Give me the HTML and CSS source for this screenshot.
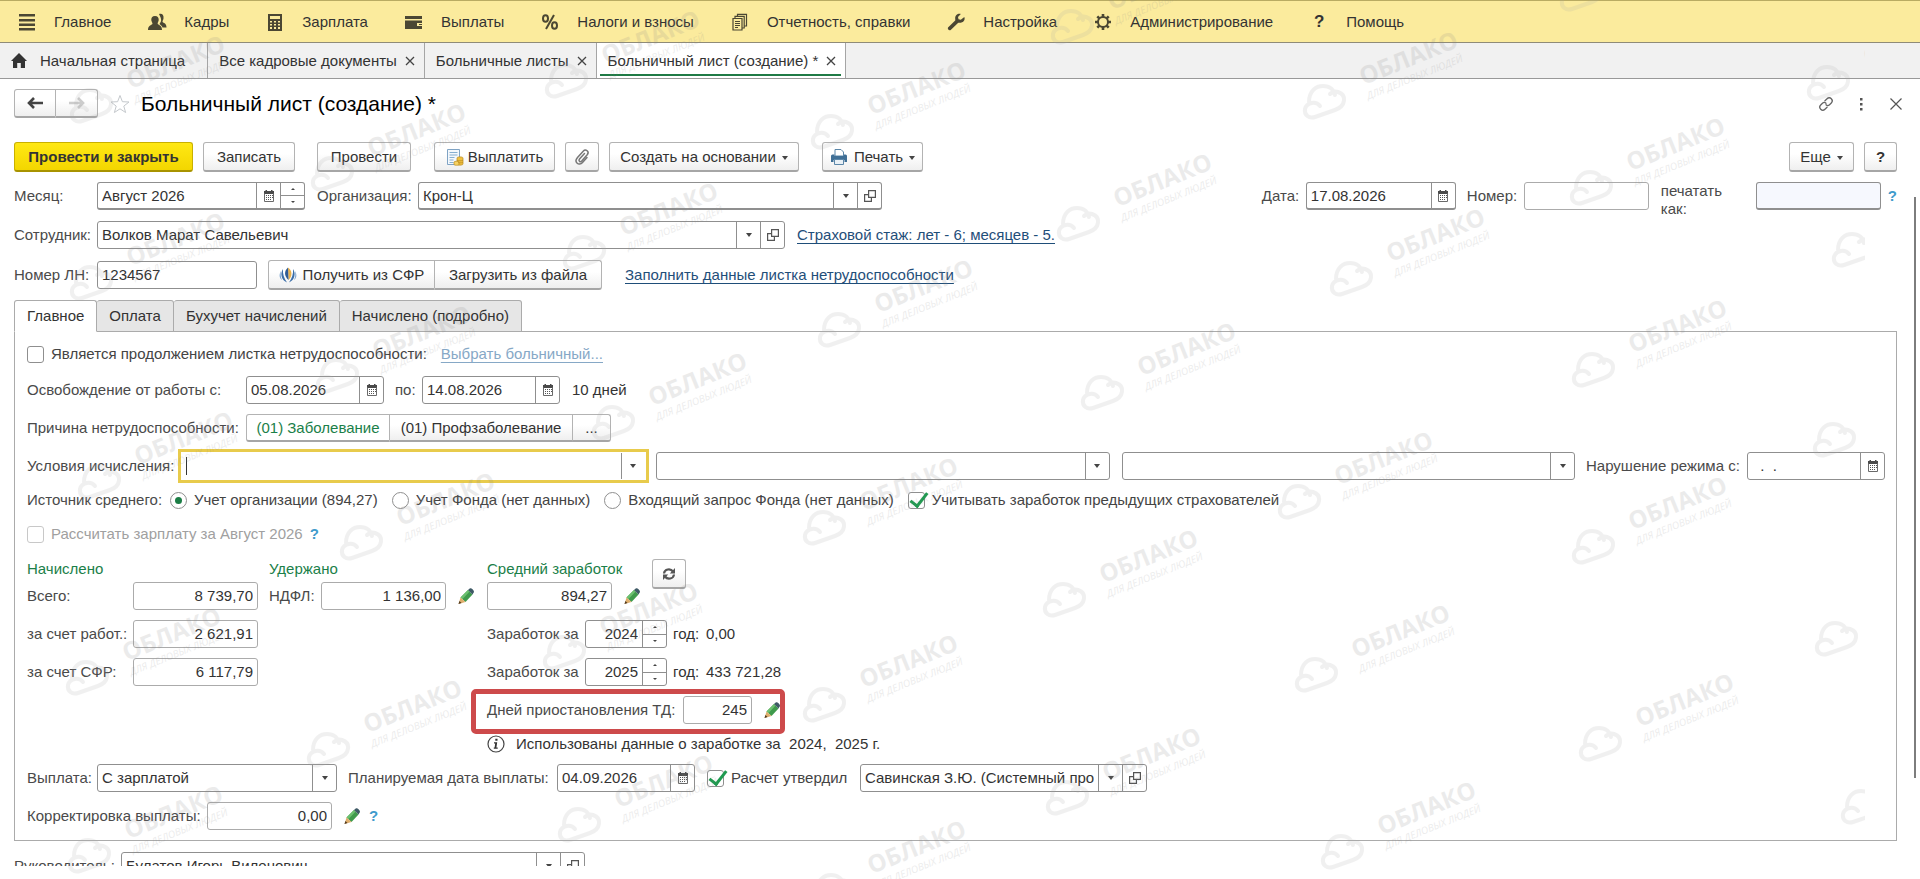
FILE: index.html
```html
<!DOCTYPE html>
<html lang="ru">
<head>
<meta charset="utf-8">
<title>Больничный лист (создание) *</title>
<link rel="stylesheet" href="styles.css">
</head>
<body>
<svg class="defs" aria-hidden="true">
  <defs>
    <symbol id="i-cal" viewBox="0 0 12 12"><path fill="#4a4a4a" d="M1 1h1.500V0h1.500v1h4V0h1.500v1H11v3H1z"/><path fill="none" stroke="#6a6a6a" d="M1.500 3.500v8h9v-8"/><path fill="#555" d="M3 5h1v1H3zM5 5h1v1H5zM7 5h1v1H7zM9 5h1v1H9zM3 7h1v1H3zM5 7h1v1H5zM7 7h1v1H7zM9 7h1v1H9zM3 9h1v1H3zM5 9h1v1H5zM7 9h1v1H7z"/></symbol>
    <symbol id="i-caret" viewBox="0 0 6 4"><path fill="#444" d="M0 0h6L3 4z"/></symbol>
    <symbol id="i-open" viewBox="0 0 12 12"><path fill="none" stroke="#555" stroke-width="1.200" d="M4.600.6h6.800v6.800H4.600zM4.600 4.600h-4v6.800h6.800v-4"/></symbol>
    <symbol id="i-up" viewBox="0 0 4 2"><path fill="#444" d="M0 2h4L2 0z"/></symbol>
    <symbol id="i-down" viewBox="0 0 4 2"><path fill="#444" d="M0 0h4L2 2z"/></symbol>
    <symbol id="i-pencil" viewBox="0 0 16 16"><path fill="#3f9a4c" d="M10 2l4.500 4.500-7 7.500L2.500 9.500z"/><path fill="#6cc06f" d="M10 2l1.600 1.600-7.300 7.700-1.800-1.800z"/><path fill="#3f5a66" d="M10 2L12 .3q1-.6 2.800 1.200t.9 3L14.500 6.500z"/><path fill="#dfae6c" d="M2.500 9.500L7.500 14 .5 16z"/><path fill="#4b3820" d="M1.400 13L.5 16l3-.9z"/></symbol>
    <symbol id="i-x" viewBox="0 0 10 10"><path stroke="#444" stroke-width="1.300" d="M1 1l8 8M9 1L1 9"/></symbol>
    <g id="cloud" fill="none" stroke="#a8a8a8" stroke-width="4" stroke-linecap="round" stroke-linejoin="round">
      <path d="M-16 0C-16-11-9-16-2-16C5-16 9-12 10-7M-5 4C-9-1-18 0-20 7C-21 13-16 17-10 15L10 8C21 4 22-7 13-10C10-11 7-10 5-8"/>
    </g>
    <g id="wm">
      <use href="#cloud"/>
      <g class="wm-text" transform="rotate(-22)">
        <text class="wm-name" x="42" y="-1">ОБЛАКО</text>
        <text class="wm-sub" x="41" y="14">ДЛЯ ДЕЛОВЫХ ЛЮДЕЙ</text>
      </g>
    </g>
  </defs>
</svg>

<nav class="menu" aria-label="Разделы">
  <a class="menu-item" href="#"><svg class="mi" viewBox="0 0 20 20"><path fill="#4b4733" d="M2 2h16v2.500H2zM2 7h16v2.500H2zM2 11.500h16V14H2zM2 16h16v2.500H2z"/></svg>Главное</a>
  <a class="menu-item" href="#"><svg class="mi" viewBox="0 0 20 20"><g fill="#4b4733"><path d="M12 2c3-1 5 1 4.500 4.500-.2 1.500-1 2-1 3.500 2 1.500 4 1.500 4 5.500h-4c-.5-2-2-2.500-3-3.500 1-1.500 2-3 1.500-5-.3-1.500-1-3-2-5z"/><path d="M8 4C10.800 4 12 6 11.700 8.300c-.3 1.700-1.200 2.200-1 3.700 2 1.500 4.300 2 4.300 6H1c0-4 2.500-4.500 4.500-6 0-1.500-.9-2-1.200-3.700C4 6 5.200 4 8 4z"/></g></svg>Кадры</a>
  <a class="menu-item" href="#"><svg class="mi" viewBox="0 0 20 20"><path fill="#4b4733" fill-rule="evenodd" d="M3 2h14v17H3zM5 4v3h10V4zM5 9v1.500h2V9zM9 9v1.500h2V9zM13 9v1.500h2V9zM5 12v1.500h2V12zM9 12v1.500h2V12zM13 12v1.500h2V12zM5 15v2h2v-2zM9 15v2h2v-2zM13 15v2h2v-2z"/></svg>Зарплата</a>
  <a class="menu-item" href="#"><svg class="mi" viewBox="0 0 20 20"><path fill="#4b4733" d="M1 4h17v3H1zM1 8.500h17V11h-5v3h5v3H1z"/><path fill="#4b4733" d="M15 12h3v1h-3z"/></svg>Выплаты</a>
  <a class="menu-item" href="#"><svg class="mi" viewBox="0 0 20 20"><g fill="none" stroke="#4b4733" stroke-width="2"><ellipse cx="5.500" cy="6.500" rx="2.500" ry="3.300"/><ellipse cx="14.500" cy="13.500" rx="2.500" ry="3.300"/><path d="M14 3L6 17"/></g></svg>Налоги и взносы</a>
  <a class="menu-item" href="#"><svg class="mi" viewBox="0 0 20 20"><g fill="none" stroke="#4b4733" stroke-width="1.200"><path d="M3 6.500h9v11.500H3zM5 6V4.300h9.200V16H12.500M7.500 4V2.300h9V14h-2"/><path d="M5 9.500h5M5 11.500h5M5 13.500h5M5 15.500h3"/></g></svg>Отчетность, справки</a>
  <a class="menu-item" href="#"><svg class="mi" viewBox="0 0 20 20"><path fill="#4b4733" d="M18.300 5l-3.500 2.800-2.300-.5-.5-2.300L14.800 2C12 1.200 9 3 9.200 6.500c0 1 .3 1.500 0 2L2 15.500c-.8 1.500 1 3.500 2.700 2.500L12 11c1-.5 2 0 3-.3 3-.7 4.300-3 3.300-5.700z"/></svg>Настройка</a>
  <a class="menu-item" href="#"><svg class="mi" viewBox="0 0 20 20"><circle cx="10" cy="10" r="5" fill="none" stroke="#4b4733" stroke-width="2"/><path stroke="#4b4733" stroke-width="2.600" d="M10 2v3M10 15v3M2 10h3M15 10h3M4.300 4.300l2 2M13.700 13.700l2 2M4.300 15.700l2-2M13.700 6.300l2-2"/></svg>Администрирование</a>
  <a class="menu-item" href="#"><span class="mi mi-q">?</span>Помощь</a>
</nav>

<nav class="tabs" aria-label="Открытые окна">
  <div class="tab tab-home"><svg class="home" viewBox="0 0 16 15"><path fill="#333" d="M8 0l8 8h-2v7H9.800v-5H6.200v5H2V8H0z"/></svg><a href="#">Начальная страница</a></div>
  <div class="tab"><a href="#">Все кадровые документы</a><button class="tab-x" aria-label="Закрыть"><svg><use href="#i-x"/></svg></button></div>
  <div class="tab"><a href="#">Больничные листы</a><button class="tab-x" aria-label="Закрыть"><svg><use href="#i-x"/></svg></button></div>
  <div class="tab tab-on"><a href="#">Больничный лист (создание) *</a><button class="tab-x" aria-label="Закрыть"><svg><use href="#i-x"/></svg></button></div>
</nav>

<main class="page">
  <header class="head">
    <div class="group nav-group">
      <button class="btn nav-btn" aria-label="Назад"><svg viewBox="0 0 16 12"><path fill="none" stroke="#444" stroke-width="2.600" d="M16 6H3M7 1L2 6l5 5"/></svg></button><button class="btn nav-btn" aria-label="Вперед"><svg viewBox="0 0 16 12"><path fill="none" stroke="#ccc" stroke-width="2.600" d="M0 6h13M9 1l5 5-5 5"/></svg></button>
    </div>
    <button class="icon-btn star" aria-label="В избранное"><svg viewBox="0 0 20 20"><path fill="none" stroke="#c4c8cc" d="M10 1.500l2.400 6.200 6.600.3-5.200 4.100 1.800 6.400L10 14.800l-5.600 3.700 1.800-6.400L1 8l6.600-.3z"/></svg></button>
    <h1>Больничный лист (создание) *</h1>
    <div class="head-tools">
      <button class="icon-btn" aria-label="Ссылка"><svg viewBox="0 0 18 18"><g fill="none" stroke="#666" stroke-width="1.300" stroke-linecap="round" transform="rotate(45 9 9)"><path d="M6 7.500V4.500C6 .5 12 .5 12 4.500V7C12 8.500 11 9.500 9.500 9.500M12 10.500v3C12 17.500 6 17.500 6 13.500V11C6 9.500 7 8.500 8.500 8.500"/></g></svg></button>
      <button class="icon-btn" aria-label="Меню"><svg viewBox="0 0 18 18"><path fill="#555" d="M8 3h2.500v2.500H8zM8 8h2.500v2.500H8zM8 13h2.500v2.500H8z"/></svg></button>
      <button class="icon-btn" aria-label="Закрыть"><svg viewBox="0 0 18 18"><path stroke="#555" stroke-width="1.200" d="M3.500 3.500l11 11M14.500 3.500l-11 11"/></svg></button>
    </div>
  </header>

  <div class="toolbar">
    <button class="btn primary">Провести и закрыть</button>
    <button class="btn b-save">Записать</button>
    <button class="btn b-post">Провести</button>
    <button class="btn b-pay"><svg class="bi" viewBox="0 0 18 18"><path fill="#f4f8fc" stroke="#7fa3c4" d="M1.500 1.500h12v15h-12z"/><path stroke="#86aed0" d="M3.500 4.500h8M3.500 7h8M3.500 9.500h5M3.500 12h4M3.500 14.500h4"/><path fill="#f0c040" stroke="#b98a1c" stroke-width=".7" d="M11 10c0-1.500 6-1.500 6 0v6c0 1.500-6 1.500-6 0z"/><path fill="#f6d263" stroke="#b98a1c" stroke-width=".7" d="M8 14c0-1 5-1 5 0v2.500c0 1-5 1-5 0z"/><path fill="none" stroke="#b98a1c" stroke-width=".7" d="M11 12c0 1 6 1 6 0M12 14.500c2 .6 5 .3 5-.5"/></svg>Выплатить</button>
    <button class="btn b-clip" aria-label="Файлы"><svg class="bi" viewBox="0 0 18 18"><path fill="none" stroke="#777" stroke-width="1.500" stroke-linecap="round" d="M11.500 5.500l-5 5.500c-1.500 2 .8 3.500 2.200 2l5.500-6.200c2.600-3.300-1.500-6.300-4-3.600L4.500 9.500c-4 4.700 1.500 9 5 5l4.500-5"/></svg></button>
    <button class="btn b-create">Создать на основании<svg class="caret"><use href="#i-caret"/></svg></button>
    <button class="btn b-print"><svg class="bi" viewBox="0 0 18 18"><path fill="#fff" stroke="#5b86a8" d="M5 1.500h6l2.500 2.500v4h-8.500z"/><path fill="#3f6f96" d="M1 8q0-1.500 1.500-1.500h2V8h9.500V6.500h1.500Q17 6.500 17 8v6h-2.500v-2h-11v2H1z"/><path fill="#e8f0f6" stroke="#5b86a8" d="M4.500 11.500h9v5h-9z"/></svg>Печать<svg class="caret"><use href="#i-caret"/></svg></button>
    <button class="btn b-more">Еще<svg class="caret"><use href="#i-caret"/></svg></button>
    <button class="btn b-help">?</button>
  </div>

  <section class="form">
    <div class="row top">
      <label class="lbl l-first" for="month">Месяц:</label>
      <div class="field strong f-month"><input id="month" value="Август 2026"><button class="fb" aria-label="Календарь"><svg class="cal"><use href="#i-cal"/></svg></button><span class="spin"><button aria-label="Больше"><svg><use href="#i-up"/></svg></button><button aria-label="Меньше"><svg><use href="#i-down"/></svg></button></span></div>
      <label class="lbl l-org" for="org">Организация:</label>
      <div class="field strong f-org"><input id="org" value="Крон-Ц"><button class="fb" aria-label="Выбрать"><svg class="car"><use href="#i-caret"/></svg></button><button class="fb" aria-label="Открыть"><svg class="cal"><use href="#i-open"/></svg></button></div>
      <div class="row right">
        <label class="lbl l-date" for="date">Дата:</label>
        <div class="field strong f-doc-date"><input id="date" value="17.08.2026"><button class="fb" aria-label="Календарь"><svg class="cal"><use href="#i-cal"/></svg></button></div>
        <label class="lbl l-num" for="num">Номер:</label>
        <div class="field soft f-num"><input id="num"></div>
        <label class="lbl l-printas" for="printas">печатать как:</label>
        <div class="field strong tint f-num"><input id="printas"></div>
        <button class="hint h-top" aria-label="Подсказка">?</button>
      </div>
    </div>

    <div class="row">
      <label class="lbl l-first" for="emp">Сотрудник:</label>
      <div class="field f-emp"><input id="emp" value="Волков Марат Савельевич"><button class="fb" aria-label="Выбрать"><svg class="car"><use href="#i-caret"/></svg></button><button class="fb" aria-label="Открыть"><svg class="cal"><use href="#i-open"/></svg></button></div>
      <a class="link ml12" href="#">Страховой стаж: лет - 6; месяцев - 5.</a>
    </div>

    <div class="row">
      <label class="lbl l-first" for="ln">Номер ЛН:</label>
      <div class="field f-ln"><input id="ln" value="1234567"></div>
      <div class="group sfr">
        <button class="btn b-sfr"><svg class="bi" viewBox="0 0 18 18"><path fill="#3b6ea8" d="M4 3C1 7 2 14 8 16.500C5 12 3.500 8 4 3zM14 3c3 4 2 11-4 13.500c3-4.500 4.500-8.500 4-13.500z"/><path fill="#7fa6d0" d="M2 5C0 8 0 12 3 14C1.500 11 1.500 8 2 5zM16 5c2 3 2 7-1 9c1.500-3 1.500-6 1-9z"/><path fill="#e8b04a" d="M9 1.500c4.500 3 4.500 9 .5 12.500z"/><path fill="#2f5c95" d="M9 1.500C5 5 5 10 9.500 14z"/></svg>Получить из СФР</button><button class="btn b-file">Загрузить из файла</button>
      </div>
      <a class="link ml23" href="#">Заполнить данные листка нетрудоспособности</a>
    </div>

    <div class="ptabs" role="tablist">
      <button class="ptab on" role="tab">Главное</button><button class="ptab" role="tab">Оплата</button><button class="ptab" role="tab">Бухучет начислений</button><button class="ptab" role="tab">Начислено (подробно)</button>
    </div>

    <div class="panel">
      <div class="row line first-line">
        <label class="check"><input type="checkbox">Является продолжением листка нетрудоспособности:</label>
        <a class="link pale ml14" href="#">Выбрать больничный...</a>
      </div>

      <div class="row">
        <label class="lbl l-reason" for="from">Освобождение от работы с:</label>
        <div class="field f-date"><input id="from" value="05.08.2026"><button class="fb" aria-label="Календарь"><svg class="cal"><use href="#i-cal"/></svg></button></div>
        <label class="lbl l-to" for="to">по:</label>
        <div class="field f-date"><input id="to" value="14.08.2026"><button class="fb" aria-label="Календарь"><svg class="cal"><use href="#i-cal"/></svg></button></div>
        <span class="txt ml12">10 дней</span>
      </div>

      <div class="row">
        <span class="lbl l-reason">Причина нетрудоспособности:</span>
        <div class="group seg">
          <button class="btn seg-a">(01) Заболевание</button><button class="btn seg-b">(01) Профзаболевание</button><button class="btn seg-c">...</button>
        </div>
      </div>

      <div class="row">
        <label class="lbl l-cond" for="cond1">Условия исчисления:</label>
        <div class="field focus c1"><span class="cursor"></span><input id="cond1"><button class="fb" aria-label="Выбрать"><svg class="car"><use href="#i-caret"/></svg></button></div>
        <div class="field c2"><input aria-label="Условие 2"><button class="fb" aria-label="Выбрать"><svg class="car"><use href="#i-caret"/></svg></button></div>
        <div class="field c3"><input aria-label="Условие 3"><button class="fb" aria-label="Выбрать"><svg class="car"><use href="#i-caret"/></svg></button></div>
        <label class="lbl l-viol" for="viol">Нарушение режима с:</label>
        <div class="field f-date"><input id="viol" value="  .  ."><button class="fb" aria-label="Календарь"><svg class="cal"><use href="#i-cal"/></svg></button></div>
      </div>

      <div class="row line sources">
        <span class="lbl l-src">Источник среднего:</span>
        <label class="check"><input type="radio" name="src" checked>Учет организации (894,27)</label>
        <label class="check"><input type="radio" name="src">Учет Фонда (нет данных)</label>
        <label class="check"><input type="radio" name="src">Входящий запрос Фонда (нет данных)</label>
        <label class="check"><input type="checkbox" checked>Учитывать заработок предыдущих страхователей</label>
      </div>

      <div class="row line calc">
        <label class="check off"><input type="checkbox" disabled>Рассчитать зарплату за Август 2026</label>
        <button class="hint" aria-label="Подсказка">?</button>
      </div>

      <div class="totals">
        <section class="col">
          <h2>Начислено</h2>
          <div class="row"><label class="lbl l-sum" for="all">Всего:</label><div class="field soft f-sum num"><input id="all" value="8 739,70"></div></div>
          <div class="row"><label class="lbl l-sum" for="emplr">за счет работ.:</label><div class="field soft f-sum num"><input id="emplr" value="2 621,91"></div></div>
          <div class="row"><label class="lbl l-sum" for="sfr">за счет СФР:</label><div class="field soft f-sum num"><input id="sfr" value="6 117,79"></div></div>
        </section>
        <section class="col">
          <h2>Удержано</h2>
          <div class="row"><label class="lbl l-ndfl" for="ndfl">НДФЛ:</label><div class="field soft f-sum num"><input id="ndfl" value="1 136,00"></div><button class="pen" aria-label="Изменить"><svg><use href="#i-pencil"/></svg></button></div>
        </section>
        <section class="col">
          <h2>Средний заработок</h2>
          <div class="row"><div class="field soft f-sum num"><input aria-label="Средний заработок" value="894,27"></div><button class="pen" aria-label="Изменить"><svg><use href="#i-pencil"/></svg></button></div>
          <div class="row"><label class="lbl l-year" for="y1">Заработок за</label><div class="field f-year num"><input id="y1" value="2024"><span class="spin"><button aria-label="Больше"><svg><use href="#i-up"/></svg></button><button aria-label="Меньше"><svg><use href="#i-down"/></svg></button></span></div><span class="txt year">год:</span><span class="txt">0,00</span></div>
          <div class="row"><label class="lbl l-year" for="y2">Заработок за</label><div class="field f-year num"><input id="y2" value="2025"><span class="spin"><button aria-label="Больше"><svg><use href="#i-up"/></svg></button><button aria-label="Меньше"><svg><use href="#i-down"/></svg></button></span></div><span class="txt year">год:</span><span class="txt">433 721,28</span></div>
          <div class="row suspend"><label class="lbl l-susp" for="susp">Дней приостановления ТД:</label><div class="field soft f-susp num"><input id="susp" value="245"></div><button class="pen" aria-label="Изменить"><svg><use href="#i-pencil"/></svg></button></div>
          <div class="row line info"><svg class="info-i" viewBox="0 0 18 18"><circle cx="9" cy="9" r="8" fill="none" stroke="#444" stroke-width="1.200"/><path fill="#333" d="M8.300 3.800h2.200v2H8.300zM7 7.300h3.200l-.8 5.200h1.300v1.200H6.800v-1.200h.8l.6-4H7z"/></svg><span class="txt pre">Использованы данные о заработке за  2024,  2025 г.</span></div>
        </section>
        <button class="btn refresh" aria-label="Обновить"><svg viewBox="0 0 14 14"><g fill="none" stroke="#555" stroke-width="2.200"><path d="M2 6.500C2.500 2 8.500 1 11 4.500M12 7.500C11.500 12 5.500 13 3 9.500"/></g><path fill="#555" d="M13 1v5.500H7.800zM1 13V7.500h5.200z"/></svg></button>
      </div>

      <div class="row">
        <label class="lbl l-pay" for="pay">Выплата:</label>
        <div class="field f-pay"><select id="pay"><option>С зарплатой</option></select><span class="fb"><svg class="car"><use href="#i-caret"/></svg></span></div>
        <label class="lbl l-plan" for="plan">Планируемая дата выплаты:</label>
        <div class="field f-date"><input id="plan" value="04.09.2026"><button class="fb" aria-label="Календарь"><svg class="cal"><use href="#i-cal"/></svg></button></div>
        <label class="check l-appr"><input type="checkbox" checked>Расчет утвердил</label>
        <div class="field f-appr"><input aria-label="Расчет утвердил" value="Савинская З.Ю. (Системный про"><button class="fb" aria-label="Выбрать"><svg class="car"><use href="#i-caret"/></svg></button><button class="fb" aria-label="Открыть"><svg class="cal"><use href="#i-open"/></svg></button></div>
      </div>

      <div class="row">
        <label class="lbl l-corr" for="corr">Корректировка выплаты:</label>
        <div class="field soft f-sum num"><input id="corr" value="0,00"></div>
        <button class="pen" aria-label="Изменить"><svg><use href="#i-pencil"/></svg></button>
        <button class="hint h-corr" aria-label="Подсказка">?</button>
      </div>
    </div>

    <div class="row">
      <label class="lbl l-head" for="boss">Руководитель:</label>
      <div class="field f-head"><input id="boss" value="Булатов Игорь Виленович"><button class="fb" aria-label="Выбрать"><svg class="car"><use href="#i-caret"/></svg></button><button class="fb" aria-label="Открыть"><svg class="cal"><use href="#i-open"/></svg></button></div>
    </div>
  </section>
</main>
<div class="scroll"></div>

<svg class="marks" aria-hidden="true">
  <use href="#wm" x="92" y="106"/><use href="#wm" x="333" y="174"/><use href="#wm" x="567" y="81"/>
  <use href="#wm" x="833" y="132"/><use href="#wm" x="1073" y="27"/><use href="#wm" x="1079" y="224"/>
  <use href="#wm" x="1325" y="102"/><use href="#wm" x="1829" y="83"/><use href="#wm" x="1592" y="188"/>
  <use href="#wm" x="1582" y="-6"/><use href="#wm" x="92" y="283"/><use href="#wm" x="585" y="253"/>
  <use href="#wm" x="338" y="376"/><use href="#wm" x="614" y="423"/><use href="#wm" x="840" y="330"/>
  <use href="#wm" x="1103" y="393"/><use href="#wm" x="1352" y="279"/><use href="#wm" x="1594" y="370"/>
  <use href="#wm" x="1854" y="250"/><use href="#wm" x="1835" y="440"/><use href="#wm" x="100" y="482"/>
  <use href="#wm" x="362" y="543"/><use href="#wm" x="565" y="653"/><use href="#wm" x="825" y="528"/>
  <use href="#wm" x="1065" y="600"/><use href="#wm" x="1300" y="502"/><use href="#wm" x="1594" y="547"/>
  <use href="#wm" x="1837" y="639"/><use href="#wm" x="88" y="678"/><use href="#wm" x="329" y="750"/>
  <use href="#wm" x="90" y="856"/><use href="#wm" x="580" y="825"/><use href="#wm" x="825" y="705"/>
  <use href="#wm" x="1068" y="798"/><use href="#wm" x="833" y="891"/><use href="#wm" x="1317" y="675"/>
  <use href="#wm" x="1601" y="744"/><use href="#wm" x="1343" y="852"/><use href="#wm" x="1863" y="807"/>
</svg>
</body>
</html>
```
FILE: styles.css
```css
* { box-sizing: border-box; }
html, body { height: 100%; }
body {
  margin: 0;
  display: flex;
  flex-direction: column;
  position: relative;
  overflow: hidden;
  background: #fff;
  color: #333;
  font: 15px/18px "Liberation Sans", Arial, sans-serif;
}
button, input, select { font: inherit; color: inherit; margin: 0; }
button { cursor: pointer; }
svg { display: block; flex: none; }
.defs { position: absolute; width: 0; height: 0; }

/* Section menu */
.menu {
  flex: none;
  height: 43px;
  display: flex;
  align-items: center;
  gap: 36px;
  padding-left: 17px;
  background: #fbeb9d;
  border-top: 1px solid #b9ab62;
  border-bottom: 1px solid #8f8b78;
}
.menu-item { display: flex; align-items: center; gap: 17px; color: #333; text-decoration: none; white-space: nowrap; }
.mi { width: 20px; height: 20px; }
.mi-q { font-weight: bold; font-size: 17px; line-height: 20px; text-align: center; }

/* Window tabs */
.tabs { flex: none; height: 36px; display: flex; background: #f1f1f1; border-bottom: 1px solid #999; }
.tab { display: flex; align-items: center; gap: 8px; padding: 0 9px 0 11px; border-right: 1px solid #a5a5a5; position: relative; }
.tab a { color: #333; text-decoration: none; white-space: nowrap; }
.tab-home { padding: 0 22px 0 11px; gap: 13px; }
.tab-on { background: #fff; }
.tab-on::after { content: ""; position: absolute; left: 3px; right: 4px; bottom: 2px; height: 2px; background: #1f7a45; }
.home { width: 16px; height: 15px; }
.tab-x { border: 0; background: none; padding: 0; }
.tab-x svg { width: 10px; height: 10px; }

/* Page */
.page { flex: 1; min-height: 0; overflow: hidden; margin-bottom: 13px; padding: 10px 23px 0 14px; }
.head { display: flex; align-items: center; height: 29px; }
.head h1 { margin: 0 0 0 11px; font-size: 21px; line-height: 24px; font-weight: normal; color: #000; }
.icon-btn { border: 0; background: none; padding: 0; }
.icon-btn svg { width: 18px; height: 18px; }
.star { margin-left: 12px; }
.star svg { width: 20px; height: 20px; }
.head-tools { margin-left: auto; display: flex; gap: 17px; margin-right: -8px; }

.btn {
  height: 30px;
  display: flex;
  align-items: center;
  justify-content: center;
  gap: 6px;
  padding: 0;
  border: 1px solid #b3b3b3;
  border-bottom: 2px solid #a6a6a6;
  border-radius: 3px;
  background: linear-gradient(#fff 40%, #efefef);
  color: #333;
  white-space: nowrap;
}
.group { display: flex; }
.group .btn { border-radius: 0; }
.group .btn + .btn { border-left: 0; }
.group .btn:first-child { border-radius: 3px 0 0 3px; }
.group .btn:last-child { border-radius: 0 3px 3px 0; }
.nav-btn { width: 42px; height: 29px; }
.nav-btn svg { width: 16px; height: 12px; }
.toolbar { display: flex; margin-top: 24px; }
.primary { width: 179px; font-weight: bold; border-color: #c9b000; border-bottom-color: #a89300; background: linear-gradient(#ffe814, #f3d600); }
.b-save { width: 92px; margin-left: 10px; }
.b-post { width: 94px; margin-left: 22px; }
.b-pay { width: 121px; margin-left: 23px; gap: 4px; }
.b-clip { width: 34px; margin-left: 10px; }
.b-create { width: 190px; margin-left: 10px; }
.b-print { width: 101px; margin-left: 23px; }
.b-more { width: 65px; margin-left: auto; }
.b-help { width: 33px; margin-left: 10px; font-weight: bold; }
.bi { width: 18px; height: 18px; }
.caret { width: 6px; height: 4px; margin-top: 3px; }

/* Form */
.form { display: flex; flex-direction: column; gap: 11px; padding-top: 10px; }
.row { display: flex; align-items: center; min-height: 28px; }
.top .row { margin-left: auto; }
.line { min-height: 20px; }
.lbl { flex: none; color: #4a4a4a; white-space: nowrap; }
.txt { color: #333; white-space: nowrap; }
.pre { white-space: pre; }
.ml12 { margin-left: 12px; }
.ml14 { margin-left: 14px; }
.ml23 { margin-left: 23px; }
.link { color: #1f4e79; text-decoration: underline; text-underline-offset: 3px; white-space: nowrap; }
.pale { color: #86a8c6; }

.field {
  flex: none;
  height: 28px;
  display: flex;
  border: 1px solid #8f8f8f;
  border-radius: 3px;
  background: #fff;
  position: relative;
}
.strong { border-bottom-width: 2px; }
.soft { border-color: #ababab; }
.field input, .field select {
  flex: 1;
  min-width: 0;
  width: 0;
  border: 0;
  outline: 0;
  padding: 0 4px;
  background: none;
  appearance: none;
  color: #333;
}
.num input { text-align: right; }
.tint { background: #f6f8fe; }
.fb { flex: none; width: 24px; display: flex; align-items: center; justify-content: center; padding: 0; border: 0; border-left: 1px solid #8f8f8f; background: none; }
.cal { width: 12px; height: 12px; }
.car { width: 6px; height: 4px; }
.spin { flex: none; width: 24px; display: flex; flex-direction: column; border-left: 1px solid #8f8f8f; }
.spin button { flex: 1; display: flex; align-items: center; justify-content: center; padding: 0; border: 0; background: none; }
.spin button + button { border-top: 1px solid #8f8f8f; }
.spin svg { width: 4px; height: 2px; }
.hint { flex: none; border: 0; background: none; padding: 0; margin-left: 7px; color: #3f9bcc; font-weight: bold; }
.h-corr { margin-left: 9px; }

.l-first { width: 83px; }
.l-org { width: 101px; margin-left: 12px; }
.f-month { width: 208px; }
.f-org { width: 464px; }
.l-date { width: 44px; }
.f-doc-date { width: 150px; }
.l-num { width: 57px; margin-left: 11px; }
.f-num { width: 125px; }
.l-printas { width: 83px; margin: 0 12px; height: 28px; white-space: normal; }
.top { height: 28px; }
.f-emp { width: 688px; }
.f-ln { width: 160px; }
.sfr { margin-left: 11px; }
.b-sfr { width: 167px; }
.b-file { width: 167px; }

/* Page tabs and panel */
.ptabs { display: flex; margin-bottom: -12px; margin-top: -1px; position: relative; }
.ptab {
  height: 32px;
  padding: 0 12px;
  border: 1px solid #ababab;
  border-left-width: 0;
  border-radius: 3px 3px 0 0;
  background: #e6e6e6;
  color: #333;
}
.ptab.on { background: #fff; border-left-width: 1px; border-bottom-color: #fff; }
.panel {
  display: flex;
  flex-direction: column;
  gap: 10px;
  padding: 12px 11px 10px 12px;
  border: 1px solid #ababab;
}
.first-line { margin-bottom: 2px; }
.l-reason { width: 219px; }
.f-date { width: 138px; }
.l-to { width: 27px; margin-left: 11px; }
.seg .btn { height: 28px; }
.seg-a.btn { width: 144px; background: #fff; color: #1b8049; }
.seg-b { width: 183px; }
.seg-c { width: 38px; }
.l-cond { width: 154px; }
.c1 { flex: 465 1 0; outline: 3px solid #e8cb4c; border-color: #fff; border-radius: 0; }
.c2 { flex: 454 1 0; margin-left: 10px; }
.c3 { flex: 453 1 0; margin-left: 12px; }
.cursor { position: absolute; left: 4px; top: 4px; width: 1px; height: 18px; background: #333; }
.l-viol { width: 161px; margin-left: 11px; }

.check { display: flex; align-items: center; gap: 7px; color: #444; white-space: nowrap; }
.check input { flex: none; appearance: none; width: 17px; height: 17px; border: 1px solid #8f8f8f; border-radius: 3px; background: #fff; position: relative; }
.check input[type="radio"] { border-radius: 50%; }
.check input[type="radio"]:checked::after { content: ""; position: absolute; inset: 4px; border-radius: 50%; background: #1b7d45; }
.check input[type="checkbox"]:checked::after {
  content: "";
  position: absolute;
  left: 5px;
  top: -4px;
  width: 7px;
  height: 15px;
  border: solid #1f9a50;
  border-width: 0 3px 3px 0;
  transform: rotate(38deg);
}
.off { color: #a0a0a0; }
.off input { border-color: #c8c8c8; }
.sources { gap: 14px; }
.l-src { width: 129px; }
.calc { margin-top: 4px; }

.totals { display: flex; margin-top: 5px; position: relative; }
.col { display: flex; flex-direction: column; gap: 10px; }
.col:nth-child(1) { width: 242px; }
.col:nth-child(2) { width: 218px; }
.col h2 { margin: 0 0 -7px; font-size: 15px; line-height: 20px; font-weight: normal; color: #1b8049; white-space: nowrap; }
.l-sum { width: 106px; }
.f-sum { width: 125px; }
.l-ndfl { width: 52px; }
.pen { flex: none; border: 0; background: none; padding: 0; margin-left: 12px; }
.pen svg { width: 16px; height: 16px; }
.l-year { width: 98px; }
.f-year { width: 82px; }
.year { width: 33px; margin-left: 6px; }
.l-susp { width: 196px; }
.f-susp { width: 69px; }
.suspend { position: relative; align-self: flex-start; }
.suspend::after { content: ""; position: absolute; inset: -7px -5px -10px -16px; border: 5px solid #cd4a4b; border-radius: 5px; pointer-events: none; }
.info-i { width: 18px; height: 18px; margin-right: 11px; }
.refresh { width: 34px; position: absolute; left: 625px; top: 0; }
.refresh svg { width: 14px; height: 14px; }

.l-pay { width: 70px; }
.f-pay { width: 240px; }
.l-plan { width: 209px; margin-left: 11px; }
.l-appr { width: 153px; margin-left: 12px; }
.f-appr { width: 287px; }
.l-corr { width: 180px; }
.l-head { width: 107px; }
.f-head { width: 464px; }

.scroll { position: absolute; right: 4px; top: 197px; width: 2px; height: 581px; background: #7d7d7d; }

/* Watermarks */
.marks { position: absolute; left: 0; top: 0; width: calc(100% - 55px); height: 100%; overflow: hidden; pointer-events: none; opacity: 0.16; }
.wm-text { fill: #888; font-family: "Open Sans", sans-serif; }
.wm-name { font-size: 24px; font-weight: 700; }
.wm-sub { font-size: 10px; font-style: italic; }
```
